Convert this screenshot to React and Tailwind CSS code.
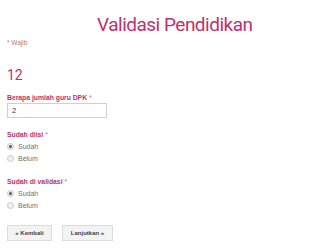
export default function App() {
  const Radio = ({ checked, label }) => (
    <div className="flex items-center h-[12px]">
      <span className="w-[7px] h-[7px] rounded-full border border-[#c8c8c8] bg-[#f0f0f0] flex items-center justify-center">
        {checked && <span className="w-[3px] h-[3px] rounded-full bg-[#555]"></span>}
      </span>
      <span className="ml-[4px] text-[7px] text-[#707070] leading-none">{label}</span>
    </div>
  );
  const Label = ({ children, mt }) => (
    <div className={`${mt} text-[6.8px] font-bold text-[#b8336a] leading-[10px] whitespace-nowrap`}>
      {children} <span className="font-normal text-[#d26a92]">*</span>
    </div>
  );
  return (
    <div className="w-[300px] h-[249px] bg-white overflow-hidden" style={{ fontFamily: '"Liberation Sans", Arial, sans-serif' }}>
      <div className="pt-[13px] pl-[97px]">
        <h1 className="text-[19px] leading-[24px] tracking-[-0.5px] text-[#c0306c] whitespace-nowrap" style={{ fontFamily: 'Roboto, sans-serif' }}>Validasi Pendidikan</h1>
      </div>
      <div className="pl-[7px]">
        <div className="mt-[1px] text-[6.5px] text-[#c07a70] leading-[10px]">* Wajib</div>
        <div className="mt-[19px] text-[14px] leading-[16px] text-[#c0306c]" style={{ fontFamily: 'Roboto, sans-serif' }}>12</div>
        <Label mt="mt-[10px]">Berapa jumlah guru DPK</Label>
        <div className="w-[100px] h-[15px] border border-[#cfcfcf] bg-white flex items-center pl-[4px] text-[7.5px] text-[#333]">2</div>
        <Label mt="mt-[12px]">Sudah diisi</Label>
        <div className="flex flex-col">
          <Radio checked label="Sudah" />
          <Radio label="Belum" />
        </div>
        <Label mt="mt-[13px]">Sudah di validasi</Label>
        <div className="flex flex-col">
          <Radio checked label="Sudah" />
          <Radio label="Belum" />
        </div>
        <div className="mt-[14px] flex gap-[10px]">
          <div className="w-[45px] h-[16px] bg-[#f3f3f3] border border-[#dcdcdc] flex items-center justify-center text-[6px] font-bold text-[#444]">« Kembali</div>
          <div className="w-[51px] h-[16px] bg-[#f3f3f3] border border-[#dcdcdc] flex items-center justify-center text-[6px] font-bold text-[#444]">Lanjutkan »</div>
        </div>
      </div>
    </div>
  );
}
